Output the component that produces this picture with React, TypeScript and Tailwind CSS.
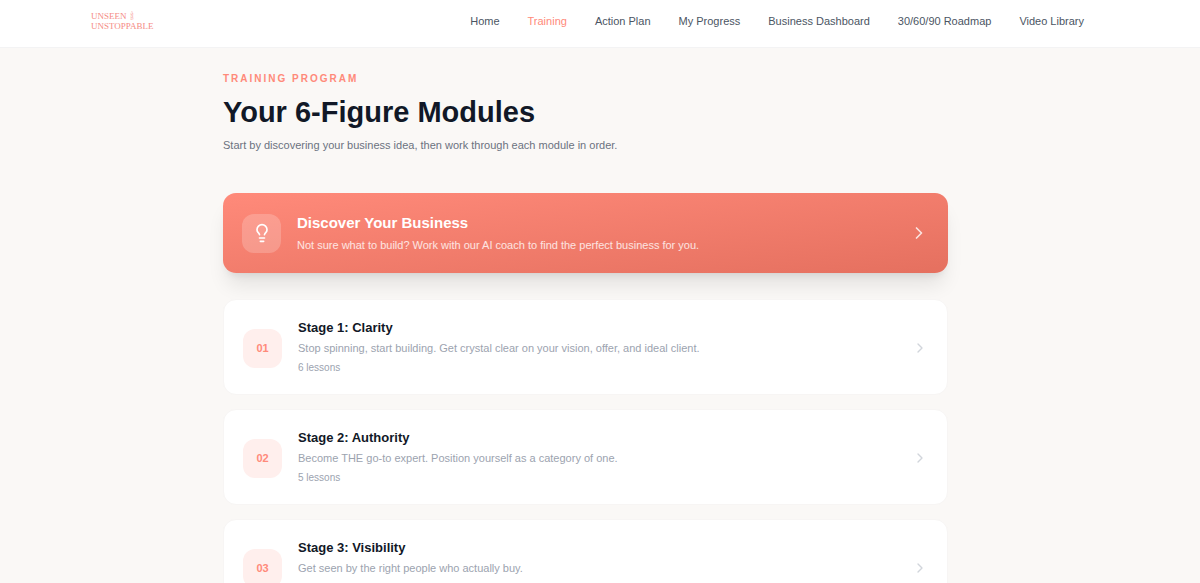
import { ChevronRight, Lightbulb } from "lucide-react";

const links = [
  "Home",
  "Training",
  "Action Plan",
  "My Progress",
  "Business Dashboard",
  "30/60/90 Roadmap",
  "Video Library",
];

const stages = [
  {
    number: "01",
    title: "Stage 1: Clarity",
    text: "Stop spinning, start building. Get crystal clear on your vision, offer, and ideal client.",
    lessons: "6 lessons",
  },
  {
    number: "02",
    title: "Stage 2: Authority",
    text: "Become THE go-to expert. Position yourself as a category of one.",
    lessons: "5 lessons",
  },
  {
    number: "03",
    title: "Stage 3: Visibility",
    text: "Get seen by the right people who actually buy.",
  },
];

function Logo() {
  return (
    <a
      href="#home"
      aria-label="Unseen and Unstoppable"
      className="flex flex-col font-['Liberation_Serif',serif] text-[9px] leading-[10px] text-[#f58b85]"
    >
      <span className="flex items-center gap-1">
        UNSEEN
        <span className="flex flex-col text-center text-[4px] leading-[3px]">
          <span>A</span>
          <span>N</span>
          <span>D</span>
        </span>
      </span>
      <span>UNSTOPPABLE</span>
    </a>
  );
}

export default function App() {
  return (
    <div className="min-h-screen bg-[#faf8f6] font-['Liberation_Sans',Arial,sans-serif] text-[#111827]">
      <header className="border-b border-[#f3f3f4] bg-white">
        <div className="mx-auto flex h-[47px] max-w-[1018px] items-center justify-between pb-[6px]">
          <Logo />
          <nav className="flex gap-7 pr-[25px] text-[11px] leading-4 text-[#4b5563]">
            {links.map((link) => (
              <a
                key={link}
                href="#"
                aria-current={link === "Training" ? "page" : undefined}
                className="whitespace-nowrap aria-[current=page]:text-[#ff8a7a]"
              >
                {link}
              </a>
            ))}
          </nav>
        </div>
      </header>
      <main className="pr-[29px]">
        <div className="mx-auto max-w-[725px] pt-[23px]">
          <p className="text-[10px] leading-4 font-bold tracking-[2px] text-[#ff8a7a]">
            TRAINING PROGRAM
          </p>
          <h1 className="mt-[9px] text-[29px] leading-8 font-bold">Your 6-Figure Modules</h1>
          <p className="mt-[7px] text-[11px] leading-5 text-[#6b7280]">
            Start by discovering your business idea, then work through each module in order.
          </p>
          <a
            href="#discover"
            className="mt-[38px] flex items-center gap-4 rounded-[13px] bg-linear-to-br from-[#ff8a7a] to-[#e5705f] px-[19px] py-[18px] text-white shadow-[0_16px_20px_-4px_rgb(0_0_0/0.09),0_6px_8px_-5px_rgb(0_0_0/0.1)]"
          >
            <span className="flex size-[39px] shrink-0 items-center justify-center rounded-xl bg-white/20">
              <Lightbulb size={20} strokeWidth={2} />
            </span>
            <span className="flex-1">
              <span className="block text-[15px] leading-6 font-bold">Discover Your Business</span>
              <span className="block text-[11px] leading-5 text-white/80">
                Not sure what to build? Work with our AI coach to find the perfect business for you.
              </span>
            </span>
            <ChevronRight size={20} className="text-white/80" />
          </a>
          <div className="mt-[26px] flex flex-col gap-[14px]">
            {stages.map((stage) => (
              <a
                key={stage.number}
                href="#stage"
                className="flex items-center gap-4 rounded-[13px] border border-[#f7f5f4] bg-white px-[19px] pt-4 pb-[14px]"
              >
                <span className="flex size-[39px] shrink-0 items-center justify-center rounded-xl bg-[#ffefed] text-[11px] font-bold text-[#ff8a7a]">
                  {stage.number}
                </span>
                <span className="min-h-16 flex-1">
                  <span className="block text-[13px] leading-6 font-bold">{stage.title}</span>
                  <span className="block text-[11px] leading-4 text-[#9ca3af]">{stage.text}</span>
                  {stage.lessons && (
                    <span className="block text-[10px] leading-6 text-[#9ca3af]">{stage.lessons}</span>
                  )}
                </span>
                <ChevronRight size={16} className="text-[#d1d5db]" />
              </a>
            ))}
          </div>
        </div>
      </main>
    </div>
  );
}
